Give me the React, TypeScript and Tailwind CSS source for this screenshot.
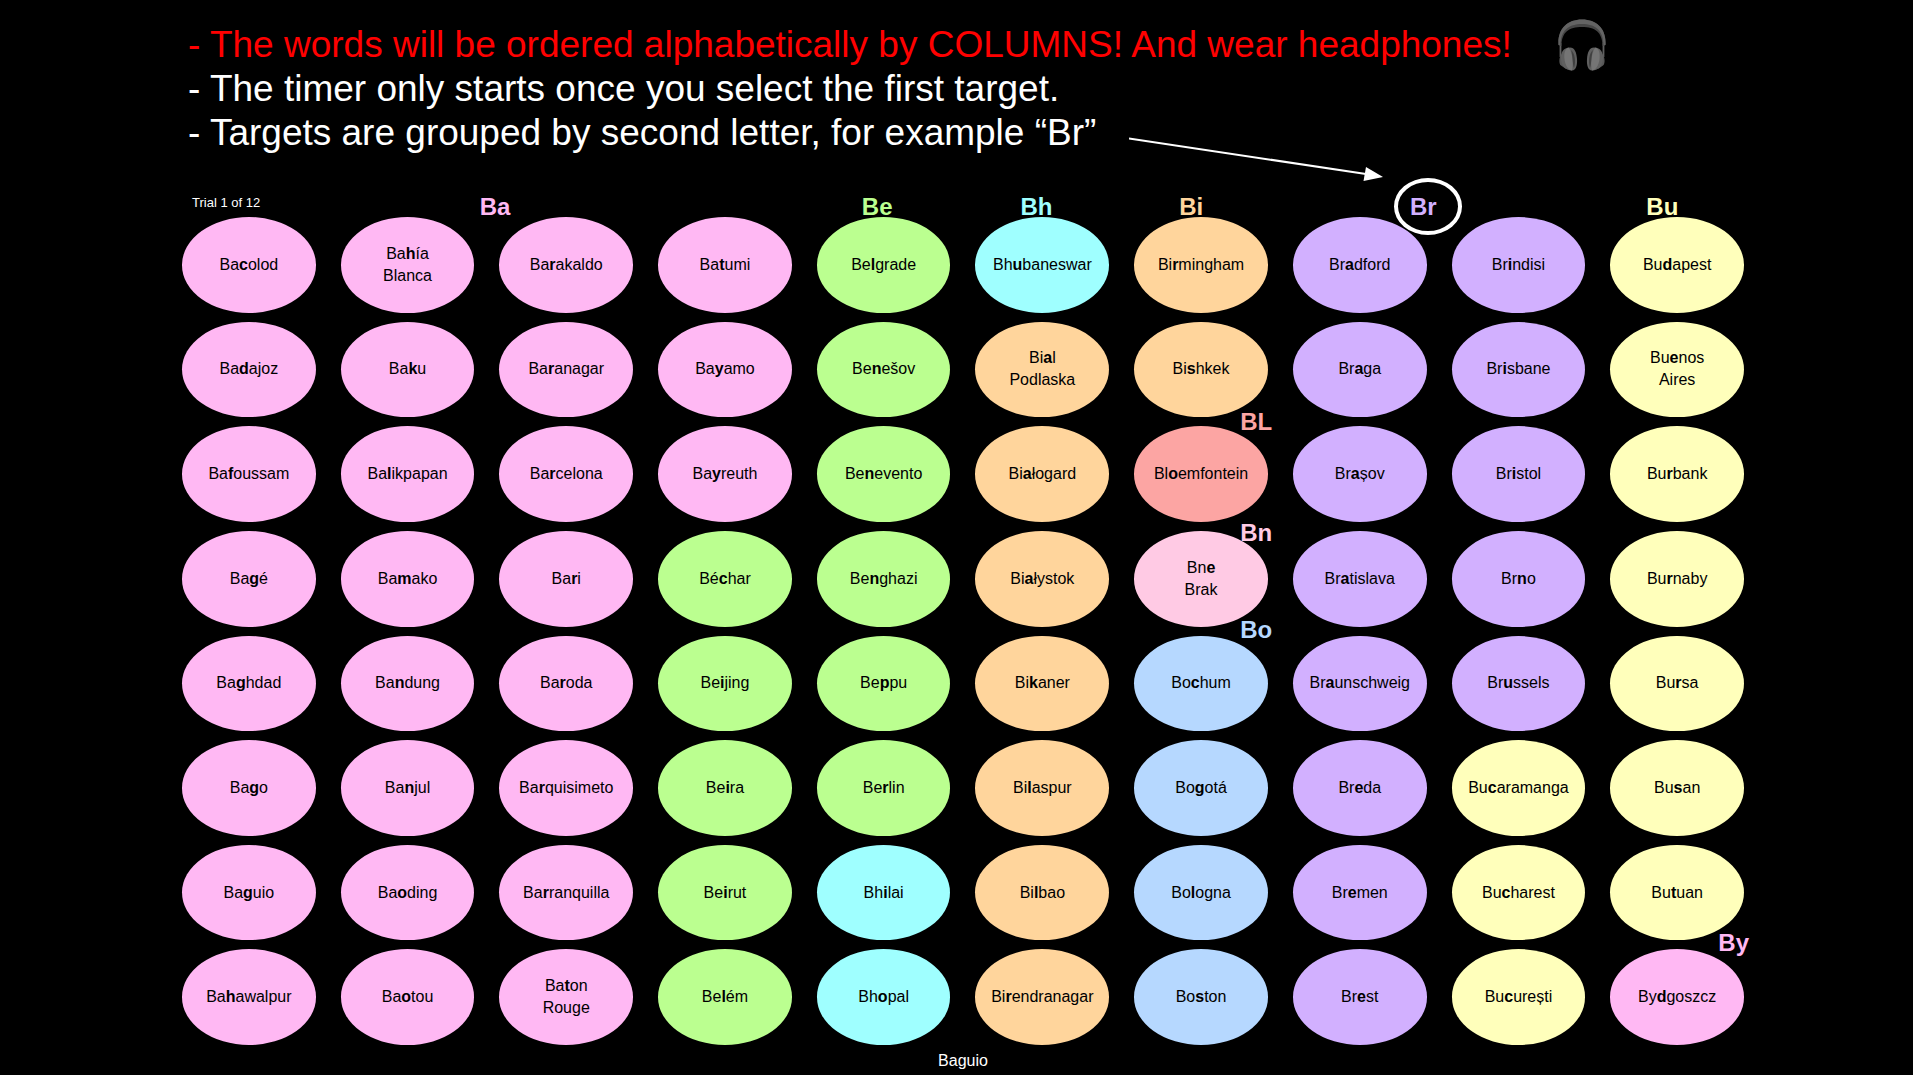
type Hue = 'pink' | 'green' | 'cyan' | 'orange' | 'purple' | 'yellow' | 'red' | 'rose' | 'blue';

const fills: Record<Hue, string> = {
  pink: 'bg-[#ffb8f3]',
  green: 'bg-[#bbff90]',
  cyan: 'bg-[#9fffff]',
  orange: 'bg-[#ffd59c]',
  purple: 'bg-[#d2b0ff]',
  yellow: 'bg-[#ffffbb]',
  red: 'bg-[#fca5a3]',
  rose: 'bg-[#ffcae4]',
  blue: 'bg-[#b6d8ff]',
};

const inks: Record<Hue, string> = {
  pink: 'text-[#ffb8f3]',
  green: 'text-[#bbff90]',
  cyan: 'text-[#9fffff]',
  orange: 'text-[#ffd59c]',
  purple: 'text-[#d2b0ff]',
  yellow: 'text-[#ffffbb]',
  red: 'text-[#fca5a3]',
  rose: 'text-[#ffcae4]',
  blue: 'text-[#b6d8ff]',
};

// Cities column by column; the third letter is emphasised.
const columns: string[][] = [
  ['Bacolod', 'Badajoz', 'Bafoussam', 'Bagé', 'Baghdad', 'Bago', 'Baguio', 'Bahawalpur'],
  ['Bahía Blanca', 'Baku', 'Balikpapan', 'Bamako', 'Bandung', 'Banjul', 'Baoding', 'Baotou'],
  ['Barakaldo', 'Baranagar', 'Barcelona', 'Bari', 'Baroda', 'Barquisimeto', 'Barranquilla', 'Baton Rouge'],
  ['Batumi', 'Bayamo', 'Bayreuth', 'Béchar', 'Beijing', 'Beira', 'Beirut', 'Belém'],
  ['Belgrade', 'Benešov', 'Benevento', 'Benghazi', 'Beppu', 'Berlin', 'Bhilai', 'Bhopal'],
  ['Bhubaneswar', 'Bial Podlaska', 'Białogard', 'Białystok', 'Bikaner', 'Bilaspur', 'Bilbao', 'Birendranagar'],
  ['Birmingham', 'Bishkek', 'Bloemfontein', 'Bne Brak', 'Bochum', 'Bogotá', 'Bologna', 'Boston'],
  ['Bradford', 'Braga', 'Brașov', 'Bratislava', 'Braunschweig', 'Breda', 'Bremen', 'Brest'],
  ['Brindisi', 'Brisbane', 'Bristol', 'Brno', 'Brussels', 'Bucaramanga', 'Bucharest', 'București'],
  ['Budapest', 'Buenos Aires', 'Burbank', 'Burnaby', 'Bursa', 'Busan', 'Butuan', 'Bydgoszcz'],
];

const hueByLetter: Record<string, Hue> = {
  a: 'pink', e: 'green', é: 'green', h: 'cyan', i: 'orange', l: 'red',
  n: 'rose', o: 'blue', r: 'purple', u: 'yellow', y: 'pink',
};

const cornerLabels: Record<string, { text: string; place: string }> = {
  Bloemfontein: { text: 'BL', place: 'left-[106px] -top-[18px]' },
  'Bne Brak': { text: 'Bn', place: 'left-[106px] -top-3' },
  Bochum: { text: 'Bo', place: 'left-[106px] -top-5' },
  Bydgoszcz: { text: 'By', place: 'left-[108px] -top-5' },
};

function Target({ name }: { name: string }) {
  const hue = hueByLetter[name[1]];
  const label = cornerLabels[name];
  const [first, second] = name.split(' ');
  return (
    <div className="relative flex min-h-16">
      <button
        type="button"
        className={`flex-1 cursor-pointer rounded-[50%] text-center text-base leading-[22px] text-black ${fills[hue]}`}
      >
        {first.slice(0, 2)}
        <b>{first[2]}</b>
        {first.slice(3)}
        {second && <span className="block">{second}</span>}
      </button>
      {label && (
        <span className={`absolute text-2xl leading-7 font-bold ${label.place} ${inks[hue]}`}>{label.text}</span>
      )}
    </div>
  );
}

function Headphones() {
  return (
    <svg viewBox="0 0 48 52" className="-my-1 h-[52px] w-12 shrink-0" role="img" aria-label="headphones">
      <path d="M2.500 24v14M45.500 24v14" stroke="#606060" strokeWidth="1.800" fill="none" />
      <path d="M0.500 26C-0.500 10 9 0.500 24 0.500S48.500 10 47.500 26L44.500 27C44.500 13 37 8 24 8S3.500 13 3.500 27Z" fill="#464646" />
      <path d="M0.500 26C-0.500 10 9 0.500 24 0.500S48.500 10 47.500 26L45.500 26.500C45.500 11 37 5 24 5S2.500 11 2.500 26.500Z" fill="#636363" />
      <path d="M4 35C1 37 0.500 45 3 46.500L8 50ZM44 35C47 37 47.500 45 45 46.500L40 50Z" fill="#585858" />
      <path d="M12 28.500C5 28.500 2.500 34 3 40C3.500 47 8 51.500 14 51.500C18 51.500 19.500 46 19 40C18.500 33 16.500 28.500 12 28.500Z" fill="#606060" />
      <path d="M36 28.500C43 28.500 45.500 34 45 40C44.500 47 40 51.500 34 51.500C30 51.500 28.500 46 29 40C29.500 33 31.500 28.500 36 28.500Z" fill="#606060" />
      <path d="M10.500 28.500C6.500 30 6 35 6.500 40C7 46 10.500 51.500 14 51.500C15.500 46 15 34 10.500 28.500Z" fill="#757575" />
      <path d="M37.500 28.500C41.500 30 42 35 41.500 40C41 46 37.500 51.500 34 51.500C32.500 46 33 34 37.500 28.500Z" fill="#757575" />
      <path d="M13 31C17 34 18 43 16 49C14.500 46 15 37 13 31ZM35 31C31 34 30 43 32 49C33.500 46 33 37 35 31Z" fill="#404040" />
    </svg>
  );
}

export default function App() {
  return (
    <main className="flex min-h-screen flex-col bg-black pr-[169px] pl-[182px] font-['Liberation_Sans',Arial,sans-serif] text-white">
      <div className="relative">
        <ul className="pt-[23px] pl-1.5 text-[37px] leading-[44px]">
          <li className="flex items-center gap-[46px] whitespace-nowrap text-[#ff0000]">
            <span>- The words will be ordered alphabetically by COLUMNS! And wear headphones!</span>
            <Headphones />
          </li>
          <li>- The timer only starts once you select the first target.</li>
          <li>- Targets are grouped by second letter, for example “Br”</li>
        </ul>
        <svg viewBox="0 0 256 46" className="absolute top-[136px] left-[947px] h-[46px] w-64" aria-hidden="true">
          <path d="M0 2.500L237 38" stroke="#fff" strokeWidth="2" />
          <path d="M254 41L237 31L234.500 45Z" fill="#fff" />
        </svg>
      </div>

      <div className="mt-auto -mb-1 grid grid-cols-10 items-end gap-x-[25px] pt-8 text-2xl leading-7 font-bold">
        <p className="self-start pt-0.5 pl-2.5 text-[13px] leading-4 font-normal whitespace-nowrap">Trial 1 of 12</p>
        <h2 className="pl-[139px] text-[#ffb8f3]">Ba</h2>
        <h2 className="col-start-5 pl-[45px] text-[#bbff90]">Be</h2>
        <h2 className="pl-[45px] text-[#9fffff]">Bh</h2>
        <h2 className="pl-[45px] text-[#ffd59c]">Bi</h2>
        <h2 className="relative z-10 pl-[117px] text-[#d2b0ff]">
          <span className="relative">
            Br
            <span className="absolute -top-[15px] -left-4 h-[57px] w-[68px] rounded-[50%] border-4 border-white" />
          </span>
        </h2>
        <h2 className="col-start-10 pl-9 text-[#ffffbb]">Bu</h2>
      </div>

      <div className="grid h-[828px] grid-flow-col grid-cols-10 grid-rows-8 gap-x-[25px] gap-y-[9px]">
        {columns.flat().map((name) => (
          <Target key={name} name={name} />
        ))}
      </div>

      <p className="pt-[5px] pb-[3px] text-center text-base leading-[22px]">Baguio</p>
    </main>
  );
}
